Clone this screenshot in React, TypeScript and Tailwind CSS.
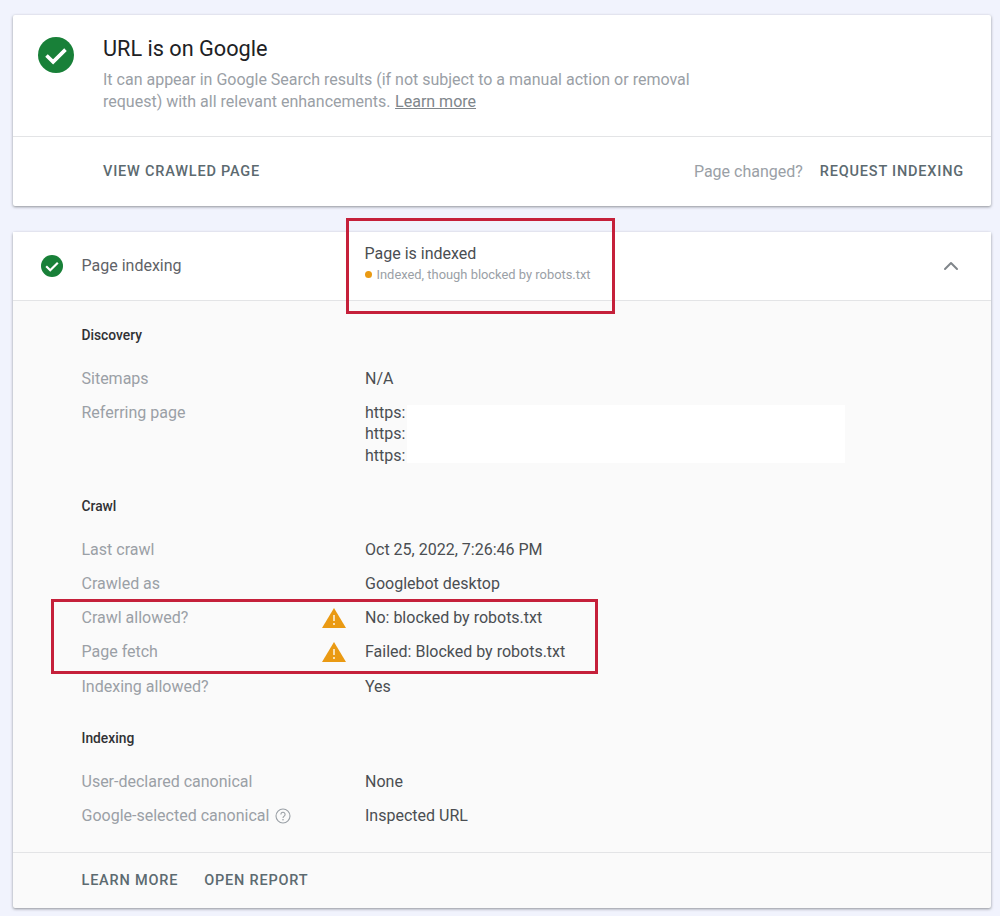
import { ChevronUp } from "lucide-react";

function CheckCircle({ className }: { className: string }) {
  return (
    <svg viewBox="0 0 36 36" className={className}>
      <circle cx="18" cy="18" r="18" fill="#188038" />
      <path d="M8.5 18.5l6.6 6.4L27.5 12.6" fill="none" stroke="#fff" strokeWidth="3.6" />
    </svg>
  );
}

function Warning() {
  return (
    <svg viewBox="0 0 24 20" className="h-[20px] w-[24px]">
      <path d="M12 0L24 20H0z" fill="#ea9a13" />
      <rect x="11.1" y="7" width="1.8" height="6" fill="#fff" opacity="0.75" />
      <rect x="11.1" y="15" width="1.8" height="2" fill="#fff" opacity="0.75" />
    </svg>
  );
}

function Help() {
  return (
    <svg viewBox="0 0 16 16" className="ml-[6px] h-[16px] w-[16px]">
      <circle cx="8" cy="8" r="7" fill="none" stroke="#9aa0a6" strokeWidth="1.1" />
      <path d="M5.9 6.4a2.1 2.1 0 1 1 3.3 1.7c-.8.6-1.2.9-1.2 1.9" fill="none" stroke="#9aa0a6" strokeWidth="1.1" />
      <circle cx="8" cy="11.8" r=".8" fill="#9aa0a6" />
    </svg>
  );
}

function Heading({ children }: { children: string }) {
  return <div className="flex h-[34px] items-center text-[13.8px] font-medium text-[#303134]">{children}</div>;
}

function Row({ label, value, warn, help }: { label: string; value: string; warn?: boolean; help?: boolean }) {
  return (
    <div className="flex h-[34.2px] items-center text-[16px]">
      <div className="flex w-[236.5px] items-center text-[#9aa0a6]">
        {label}
        {help && <Help />}
      </div>
      <div className="flex w-[47px] justify-center pr-[16px]">{warn && <Warning />}</div>
      <div className="text-[#4a4e52]">{value}</div>
    </div>
  );
}

export default function App() {
  return (
    <div className="relative h-[916px] overflow-hidden bg-[#f1f3fd] px-[13px] pt-[15px] font-['Roboto',sans-serif]">
      <section className="h-[191px] w-[978px] rounded-[2px] bg-white shadow-[0_1px_3px_rgba(60,64,67,0.55)]">
        <div className="flex h-[122px] border-b border-[#e3e4e6]">
          <div className="w-[90px] pl-[25px] pt-[22px]">
            <CheckCircle className="h-[36px] w-[36px]" />
          </div>
          <div className="pt-[20px]">
            <h1 className="text-[21.7px] font-normal leading-[28px] text-[#202124]">URL is on Google</h1>
            <div className="mt-[6px] text-[16px] leading-[22px] text-[#9aa0a6]">
              <div>It can appear in Google Search results (if not subject to a manual action or removal</div>
              <div className="flex gap-[4.5px]">
                <span>request) with all relevant enhancements.</span>
                <span className="text-[#80868b] underline">Learn more</span>
              </div>
            </div>
          </div>
        </div>
        <div className="flex h-[69px] items-center justify-between pl-[90px] pr-[27px]">
          <span className="text-[14.5px] font-medium tracking-[0.8px] text-[#5c6a70]">VIEW CRAWLED PAGE</span>
          <div className="flex items-center">
            <span className="text-[16px] text-[#9aa0a6]">Page changed?</span>
            <span className="ml-[17px] text-[14.5px] font-medium tracking-[0.8px] text-[#5c6a70]">REQUEST INDEXING</span>
          </div>
        </div>
      </section>

      <section className="mt-[26px] h-[676px] w-[978px] rounded-[2px] bg-[#fafafa] shadow-[0_1px_3px_rgba(60,64,67,0.55)]">
        <div className="flex h-[69px] items-center border-b border-[#e3e4e6] bg-white">
          <div className="w-[68.5px] pl-[28px]">
            <CheckCircle className="h-[22px] w-[22px]" />
          </div>
          <div className="w-[283px] text-[16px] text-[#5f6368]">Page indexing</div>
          <div className="flex-1 pb-[6px]">
            <div className="text-[16px] leading-[20px] text-[#4a4e52]">Page is indexed</div>
            <div className="mt-[3px] flex items-center text-[12.9px] leading-[16px] text-[#9aa0a6]">
              <span className="mr-[5px] h-[7px] w-[7px] rounded-full bg-[#ea9a13]" />
              Indexed, though blocked by robots.txt
            </div>
          </div>
          <ChevronUp className="mr-[28px] h-[24px] w-[24px] text-[#80868b]" strokeWidth={2} />
        </div>

        <div className="h-[552px] border-b border-[#e3e4e6] pl-[68.5px] pt-[17px]">
          <Heading>Discovery</Heading>
          <div className="mt-[9.5px]">
            <Row label="Sitemaps" value="N/A" />
          </div>
          <div className="flex pt-[6px] text-[16px] leading-[21.5px]">
            <div className="w-[283.5px] text-[#9aa0a6]">Referring page</div>
            <div className="text-[#4a4e52]">
              https:
              <br />
              https:
              <br />
              https:
            </div>
            <div className="ml-[2px] mt-[3.5px] h-[58px] w-[438px] bg-white" />
          </div>

          <div className="mt-[23px]">
            <Heading>Crawl</Heading>
          </div>
          <div className="mt-[9.5px]">
            <Row label="Last crawl" value="Oct 25, 2022, 7:26:46 PM" />
            <Row label="Crawled as" value="Googlebot desktop" />
            <Row label="Crawl allowed?" value="No: blocked by robots.txt" warn />
            <Row label="Page fetch" value="Failed: Blocked by robots.txt" warn />
            <Row label="Indexing allowed?" value="Yes" />
          </div>

          <div className="mt-[18px]">
            <Heading>Indexing</Heading>
          </div>
          <div className="mt-[9.5px]">
            <Row label="User-declared canonical" value="None" />
            <Row label="Google-selected canonical" value="Inspected URL" help />
          </div>
        </div>

        <div className="flex h-[55px] items-center gap-[26px] pl-[68.5px] text-[14.5px] font-medium tracking-[0.8px] text-[#5c6a70]">
          <span>LEARN MORE</span>
          <span>OPEN REPORT</span>
        </div>
      </section>

      {/* red annotation boxes drawn over the screenshot */}
      <div className="absolute left-[346px] top-[218px] h-[96px] w-[269px] border-[3px] border-[#c5203a]" />
      <div className="absolute left-[51px] top-[599px] h-[75px] w-[547px] border-[3px] border-[#c5203a]" />
    </div>
  );
}
